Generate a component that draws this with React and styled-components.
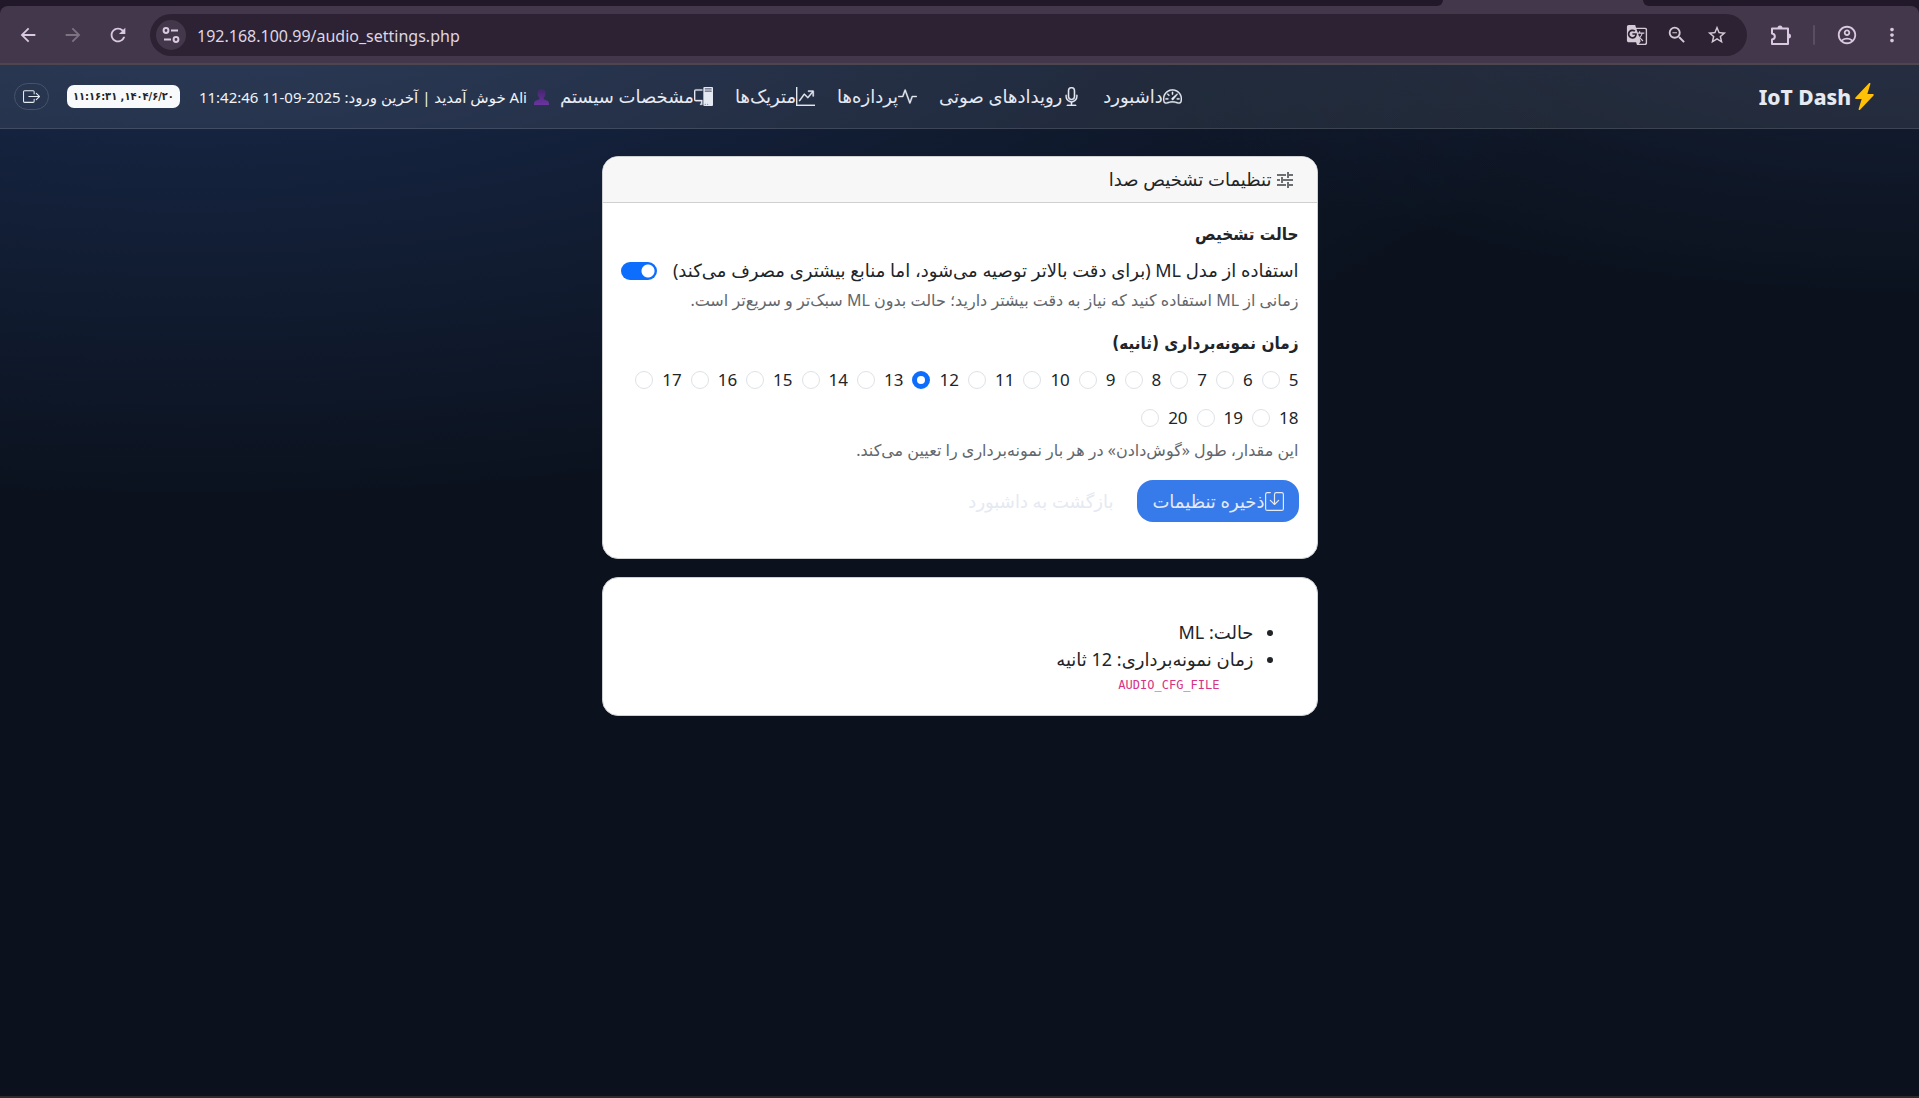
import React from "react";
import styled, { createGlobalStyle } from "styled-components";
import {
  MdArrowBack, MdArrowForward, MdRefresh, MdGTranslate, MdZoomOut, MdStarBorder,
  MdOutlineAccountCircle, MdMoreVert,
} from "react-icons/md";
import {
  BsSpeedometer2, BsMic, BsActivity, BsGraphUpArrow, BsPcDisplay, BsBoxArrowRight,
  BsLightningChargeFill, BsSave,
} from "react-icons/bs";

const GlobalStyle = createGlobalStyle`
  * { box-sizing: border-box; }
  body { margin: 0; background: #0b121e; }
  body, button, input { font-family: "Noto Sans", "DejaVu Sans", sans-serif; }
`;

const Window = styled.div`
  min-height: 100vh;
  display: flex;
  flex-direction: column;
`;

const TabStrip = styled.div`
  height: 6px;
  display: flex;
  justify-content: space-between;
  background: #43384b;
`;

const TabGap = styled.div`
  background: #21182a;
  width: ${(p) => p.$width};
  border-radius: ${(p) => p.$radius};
`;

const ToolbarBack = styled.div`
  background: #21182a;
`;

const Toolbar = styled.div`
  display: flex;
  align-items: center;
  height: 59px;
  padding: 0 15px;
  background: #43384b;
  border-bottom: 2px solid #4f454f;
  border-radius: 8px 8px 0 0;
`;

const ToolButton = styled.button`
  display: flex;
  align-items: center;
  justify-content: center;
  flex: none;
  width: ${(p) => p.$width || 40}px;
  height: 30px;
  padding: 0;
  border: 0;
  border-radius: 15px;
  background: ${(p) => p.$fill || "none"};
  color: ${(p) => p.$color || "#d9c8e0"};
  font-size: 22px;
`;

const History = styled.div`
  display: flex;
  gap: 20px;
  margin-right: 20px;
`;

const Omnibox = styled.div`
  flex: 1;
  display: flex;
  align-items: center;
  height: 42px;
  padding: 0 10px 0 6px;
  border-radius: 21px;
  background: #2c2234;
`;

const Address = styled.input`
  flex: 1;
  min-width: 0;
  margin-left: 11px;
  padding: 2px 0 0;
  border: 0;
  outline: 0;
  background: none;
  color: #dfd6e2;
  font-size: 16px;
`;

const ToolbarEnd = styled.div`
  display: flex;
  align-items: center;
  gap: 12px;
  margin-left: 14px;
`;

const Separator = styled.span`
  width: 2px;
  height: 20px;
  border-radius: 1px;
  background: #5b4d62;
`;

const Page = styled.div`
  flex: 1;
  border-bottom: 2px solid #2d2c2c;
  background:
    radial-gradient(2400px 900px at 10% -10%, #1a2b4e 0%, transparent 60%),
    radial-gradient(1400px 565px at 100% -10%, #17223a 0%, transparent 60%),
    #0b121e;
`;

const Navbar = styled.header`
  display: flex;
  align-items: center;
  justify-content: space-between;
  height: 64px;
  padding: 0 41px 0 14px;
  background: rgba(255, 255, 255, 0.08);
  border-bottom: 1px solid rgba(255, 255, 255, 0.12);
`;

const Brand = styled.a`
  display: flex;
  align-items: center;
  color: #e5e9f2;
  font-size: 21px;
  font-weight: 800;
  text-decoration: none;
  svg { color: #ffc107; font-size: 27px; }
`;

const NavGroup = styled.div`
  display: flex;
  align-items: center;
`;

const NavLinks = styled.nav`
  display: flex;
  gap: 22px;
`;

const NavLink = styled.a`
  display: flex;
  align-items: center;
  color: #e5e9f2;
  font-size: 18px;
  line-height: 27px;
  text-decoration: none;
  svg { font-size: 19px; stroke: currentColor; stroke-width: 0.3; }
`;

const Greeting = styled.span`
  display: flex;
  align-items: center;
  gap: 7px;
  margin: 0 11px 0 19px;
  color: #f1f3f7;
  font-size: 15px;
  line-height: 24px;
`;

const Clock = styled.time`
  padding: 0 6px;
  border-radius: 7px;
  background: #f8f9fa;
  color: #212529;
  font-family: "DejaVu Sans Condensed", "DejaVu Sans", sans-serif;
  font-size: 11px;
  font-weight: 700;
  line-height: 23px;
`;

const Logout = styled.a`
  display: flex;
  align-items: center;
  justify-content: center;
  width: 35px;
  height: 27px;
  margin-right: 18px;
  border: 1px solid #47536a;
  border-radius: 14px;
  color: #e5e9f2;
  font-size: 17px;
`;

const Main = styled.main`
  display: flex;
  flex-direction: column;
  gap: 18px;
  width: 100%;
  max-width: 716px;
  margin: 0 auto;
  padding: 27px 0;
`;

const Card = styled.section`
  border: 1px solid #cfd0d2;
  border-radius: 16px;
  background: #fff;
  color: #212529;
  font-size: 18px;
  line-height: 27px;
  overflow: hidden;
`;

const CardHeader = styled.h1`
  display: flex;
  align-items: center;
  gap: 5px;
  margin: 0;
  padding: 9px 24px;
  border-bottom: 1px solid #cfd0d2;
  background: #f7f7f7;
  font-size: 18px;
  font-weight: 400;
  line-height: 27px;
`;

const CardForm = styled.form`
  padding: 18px 18px 36px;
`;

const Group = styled.fieldset`
  margin: 0 0 18px;
  padding: 0;
  border: 0;
`;

const Legend = styled.legend`
  margin-bottom: 9px;
  padding: 0;
  font-family: "DejaVu Sans Condensed", "DejaVu Sans", sans-serif;
  font-size: 17px;
  font-weight: 700;
`;

const SwitchRow = styled.label`
  display: flex;
  align-items: center;
  justify-content: space-between;
  margin-bottom: 5px;
`;

const Switch = styled.input`
  appearance: none;
  width: 36px;
  height: 18px;
  margin: 0;
  border-radius: 9px;
  background: radial-gradient(circle at 27px 9px, #fff 6px, transparent 7px) #0d6efd;
`;

const Hint = styled.p`
  margin: 0;
  color: #62676c;
  font-size: 16px;
  line-height: 23px;
`;

const Options = styled.div`
  display: flex;
  flex-wrap: wrap;
  gap: 11px 9px;
  margin-bottom: 8px;
  font-size: 17px;
`;

const Option = styled.label`
  display: flex;
  align-items: center;
  gap: 9px;
`;

const Radio = styled.input`
  appearance: none;
  width: 18px;
  height: 18px;
  margin: 0;
  border: 1px solid #dee2e6;
  border-radius: 50%;
  background: #fff;
  &:checked { border: 5px solid #0d6efd; }
`;

const Actions = styled.div`
  display: flex;
  gap: 9px;
`;

const Save = styled.button`
  display: flex;
  align-items: center;
  height: 42px;
  padding: 0 15px;
  border: 0;
  border-radius: 16px;
  background: #377aea;
  color: #e5e9f2;
  font-size: 18px;
  svg { font-size: 19px; }
`;

const BackLink = styled.a`
  padding: 0 15px;
  color: #e5e9f2;
  line-height: 42px;
  text-decoration: none;
`;

const Summary = styled.div`
  padding: 41px 18px 18px;
`;

const SummaryList = styled.ul`
  margin: 0;
  padding: 0 45px 0 0;
`;

const ConfigName = styled.code`
  display: block;
  padding-right: 79px;
  color: #d63384;
  font-family: "DejaVu Sans Mono", monospace;
  font-size: 12px;
  line-height: 24px;
`;

const SiteIcon = () => (
  <svg width="18" height="18" viewBox="0 0 18 18" fill="none" stroke="currentColor" strokeWidth="2">
    <circle cx="4" cy="4.5" r="2.4" />
    <path d="M9 4.5h7M2 13.500h7" />
    <circle cx="14" cy="13.500" r="2.400" />
  </svg>
);

const PuzzleIcon = () => (
  <svg width="22" height="22" viewBox="0 0 22 22" fill="none" stroke="currentColor" strokeWidth="2" strokeLinejoin="round">
    <path d="M2 4.500h16v15.500H2v-4.500c3.800-.6 3.800-5.400 0-6z" />
    <path fill="currentColor" stroke="none" d="M7.500 4a2.500 2.500 0 0 1 5 0zM18.500 9.500a2.500 2.500 0 0 1 0 5z" />
  </svg>
);

const SlidersIcon = () => (
  <svg width="16" height="16" viewBox="0 0 16 16" fill="none" stroke="#6d7073" strokeWidth="2">
    <path d="M0 3h9M11 3h5M0 8h3M5 8h11M0 13h9M11 13h5" />
    <path d="M11 0v6M5 5v6M11 10v6" />
  </svg>
);

const UserIcon = () => (
  <svg width="15" height="16" viewBox="0 0 15 16">
    <defs>
      <linearGradient id="bust" x1="0" y1="0" x2="0" y2="1">
        <stop offset="0" stopColor="#43256b" />
        <stop offset="1" stopColor="#6a35a0" />
      </linearGradient>
    </defs>
    <path fill="url(#bust)" d="M7.500 0a4 4 0 0 1 4 4.300c0 2-.8 3.600-1.900 4.500v1.400l3.300 1.300c1.300.6 2.100 1.900 2.100 3.500v1H0v-1c0-1.600.8-2.900 2.100-3.500l3.300-1.300V8.800C4.300 7.900 3.500 6.300 3.500 4.300a4 4 0 0 1 4-4.300z" />
  </svg>
);

const links = [
  ["داشبورد", BsSpeedometer2],
  ["رویدادهای صوتی", BsMic],
  ["پردازه‌ها", BsActivity],
  ["متریک‌ها", BsGraphUpArrow],
  ["مشخصات سیستم", BsPcDisplay],
];

const seconds = Array.from({ length: 16 }, (_, i) => i + 5);

export default function App() {
  return (
    <Window>
      <GlobalStyle />
      <TabStrip>
        <TabGap $width="75.2%" $radius="0 0 12px 0" />
        <TabGap $width="14.4%" $radius="0 0 0 12px" />
      </TabStrip>
      <ToolbarBack>
        <Toolbar>
          <History>
            <ToolButton $width={25} aria-label="Back"><MdArrowBack /></ToolButton>
            <ToolButton $width={25} $color="#7d7184" aria-label="Forward"><MdArrowForward /></ToolButton>
            <ToolButton $width={25} aria-label="Reload"><MdRefresh /></ToolButton>
          </History>
          <Omnibox>
            <ToolButton $width={30} $fill="#43384b" aria-label="Site information"><SiteIcon /></ToolButton>
            <Address aria-label="Address" defaultValue="192.168.100.99/audio_settings.php" />
            <ToolButton $color="#d3cad5" aria-label="Translate"><MdGTranslate /></ToolButton>
            <ToolButton $color="#d3cad5" aria-label="Zoom"><MdZoomOut /></ToolButton>
            <ToolButton $color="#d3cad5" aria-label="Bookmark"><MdStarBorder /></ToolButton>
          </Omnibox>
          <ToolbarEnd>
            <ToolButton aria-label="Extensions"><PuzzleIcon /></ToolButton>
            <Separator />
            <ToolButton aria-label="Profile"><MdOutlineAccountCircle /></ToolButton>
            <ToolButton $width={25} aria-label="Menu"><MdMoreVert /></ToolButton>
          </ToolbarEnd>
        </Toolbar>
      </ToolbarBack>
      <Page dir="rtl" lang="fa">
        <Navbar>
          <Brand href="#"><BsLightningChargeFill />IoT Dash</Brand>
          <NavGroup>
            <NavLinks>
              {links.map(([text, Icon]) => (
                <NavLink href="#" key={text}><Icon />{text}</NavLink>
              ))}
            </NavLinks>
            <Greeting><UserIcon /><span>Ali خوش آمدید | آخرین ورود: 2025-09-11 11:42:46</span></Greeting>
            <Clock>۱۴۰۴/۶/۲۰, ۱۱:۱۶:۳۱</Clock>
            <Logout href="#" aria-label="خروج"><BsBoxArrowRight /></Logout>
          </NavGroup>
        </Navbar>
        <Main>
          <Card>
            <CardHeader><SlidersIcon />تنظیمات تشخیص صدا</CardHeader>
            <CardForm>
              <Group>
                <Legend>حالت تشخیص</Legend>
                <SwitchRow>
                  استفاده از مدل ML (برای دقت بالاتر توصیه می‌شود، اما منابع بیشتری مصرف می‌کند)
                  <Switch type="checkbox" role="switch" defaultChecked />
                </SwitchRow>
                <Hint>زمانی از ML استفاده کنید که نیاز به دقت بیشتر دارید؛ حالت بدون ML سبک‌تر و سریع‌تر است.</Hint>
              </Group>
              <Group>
                <Legend>زمان نمونه‌برداری (ثانیه)</Legend>
                <Options>
                  {seconds.map((n) => (
                    <Option key={n}>{n}<Radio type="radio" name="seconds" value={n} defaultChecked={n === 12} /></Option>
                  ))}
                </Options>
                <Hint>این مقدار، طول «گوش‌دادن» در هر بار نمونه‌برداری را تعیین می‌کند.</Hint>
              </Group>
              <Actions>
                <Save type="button"><BsSave />ذخیره تنظیمات</Save>
                <BackLink href="#">بازگشت به داشبورد</BackLink>
              </Actions>
            </CardForm>
          </Card>
          <Card>
            <Summary>
              <SummaryList>
                <li>حالت: ML</li>
                <li>زمان نمونه‌برداری: 12 ثانیه</li>
              </SummaryList>
              <ConfigName>AUDIO_CFG_FILE</ConfigName>
            </Summary>
          </Card>
        </Main>
      </Page>
    </Window>
  );
}
